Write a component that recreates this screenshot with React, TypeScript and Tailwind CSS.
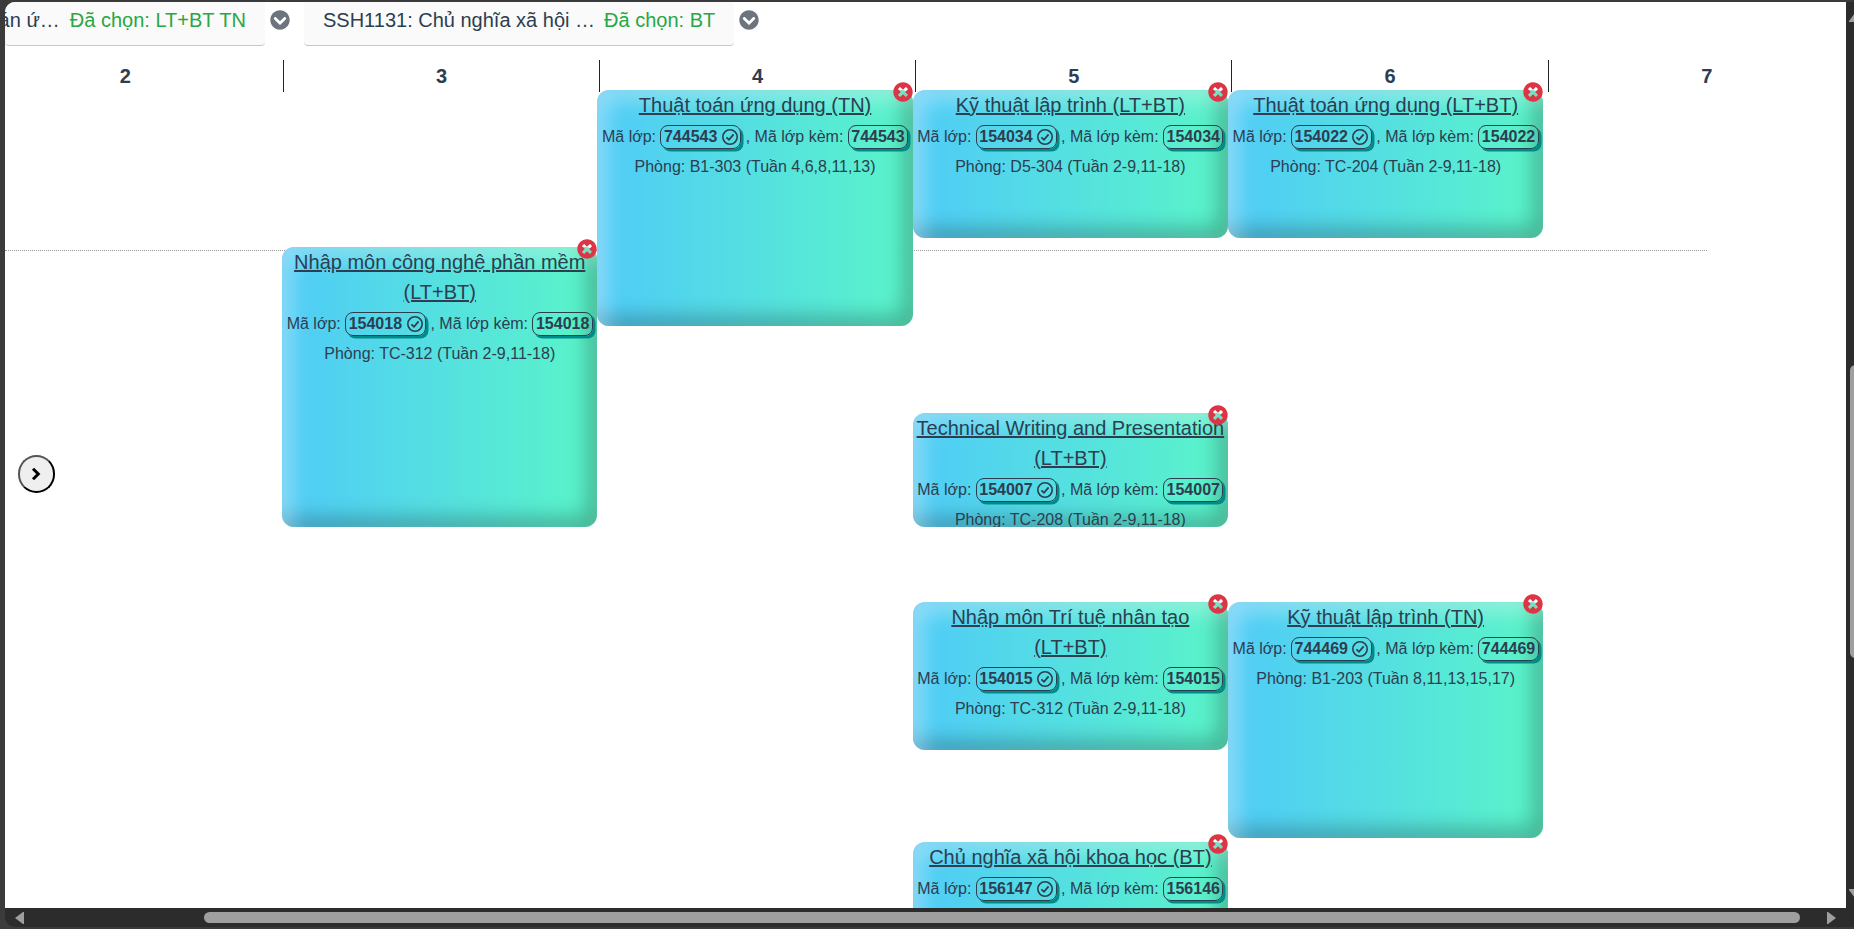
import React from "react";
import { FaChevronCircleDown, FaTimesCircle } from "react-icons/fa";

type Course = {
  title: string;
  code: string;
  pair: string;
  room: string;
  box: string;
};

const day3: Course[] = [
  { title: "Nhập môn công nghệ phần mềm (LT+BT)", code: "154018", pair: "154018", room: "TC-312 (Tuần 2-9,11-18)", box: "mt-[157px] h-[280px]" },
];
const day4: Course[] = [
  { title: "Thuật toán ứng dụng (TN)", code: "744543", pair: "744543", room: "B1-303 (Tuần 4,6,8,11,13)", box: "h-[236px]" },
];
const day5: Course[] = [
  { title: "Kỹ thuật lập trình (LT+BT)", code: "154034", pair: "154034", room: "D5-304 (Tuần 2-9,11-18)", box: "h-[148px]" },
  { title: "Technical Writing and Presentation (LT+BT)", code: "154007", pair: "154007", room: "TC-208 (Tuần 2-9,11-18)", box: "mt-[175px] h-[114px]" },
  { title: "Nhập môn Trí tuệ nhân tạo (LT+BT)", code: "154015", pair: "154015", room: "TC-312 (Tuần 2-9,11-18)", box: "mt-[75px] h-[148px]" },
  { title: "Chủ nghĩa xã hội khoa học (BT)", code: "156147", pair: "156146", room: "", box: "mt-[92px] h-[120px]" },
];
const day6: Course[] = [
  { title: "Thuật toán ứng dụng (LT+BT)", code: "154022", pair: "154022", room: "TC-204 (Tuần 2-9,11-18)", box: "h-[148px]" },
  { title: "Kỹ thuật lập trình (TN)", code: "744469", pair: "744469", room: "B1-203 (Tuần 8,11,13,15,17)", box: "mt-[364px] h-[236px]" },
];
const columns: Course[][] = [[], day3, day4, day5, day6];

function CheckIcon() {
  return (
    <svg viewBox="0 0 16 16" className="ml-[4.5px] h-4 w-4 shrink-0" fill="none" stroke="currentColor" strokeWidth="1.6">
      <circle cx="8" cy="8" r="7.2" />
      <path d="M4.4 8.3 L7 10.8 L11.6 5.3" strokeWidth="1.8" />
    </svg>
  );
}

function CodeBadge({ code, checked }: { code: string; checked?: boolean }) {
  return (
    <span className="flex h-6 items-center rounded-lg border border-[#2c3e50] px-[2.5px] font-bold shadow-[2.5px_2.5px_0_0_#008b8b]">
      {code}
      {checked && <CheckIcon />}
    </span>
  );
}

function CourseCard({ course }: { course: Course }) {
  return (
    <article className={"relative shrink-0 " + course.box}>
      <div className="h-full overflow-hidden rounded-xl bg-[linear-gradient(to_right,#4fcbf8,#5af5c8)] text-center shadow-[inset_10px_10px_20px_0_rgba(255,255,255,0.36),inset_-10px_-10px_20px_0_rgba(0,0,0,0.25)]">
        <h3 className="text-xl leading-[30px] underline">{course.title}</h3>
        <div className="flex h-8 items-center justify-center whitespace-nowrap pt-px text-base">
          <span className="mr-[4.4px]">Mã lớp:</span>
          <CodeBadge code={course.code} checked />
          <span className="mx-[4.4px]">, Mã lớp kèm:</span>
          <CodeBadge code={course.pair} />
        </div>
        {course.room && <p className="text-base leading-[30px]">Phòng: {course.room}</p>}
      </div>
      <button className="absolute -top-[8px] right-0 h-5 w-5" aria-label="Xóa">
        <FaTimesCircle className="h-5 w-5 text-[#dc3545]" />
      </button>
    </article>
  );
}

function CourseTabs() {
  return (
    <div className="flex h-[44px] text-xl leading-[30px]">
      <div className="flex h-[44px] w-[260px] shrink-0 justify-end gap-[10px] rounded-b border-b border-[#c2c8d4] bg-[#fafafa] pr-[19px] pt-[3px] whitespace-nowrap">
        <span>án ứ…</span>
        <span className="text-[#28a745]">Đã chọn: LT+BT TN</span>
      </div>
      <FaChevronCircleDown className="ml-[4.5px] mt-[7.5px] h-5 w-5 shrink-0 text-[#6c757d]" />
      <div className="ml-[14.5px] flex h-[44px] w-[430px] shrink-0 gap-[9px] rounded-b border-b border-[#c2c8d4] bg-[#fafafa] pl-[19px] pt-[3px] whitespace-nowrap">
        <span>SSH1131: Chủ nghĩa xã hội …</span>
        <span className="text-[#28a745]">Đã chọn: BT</span>
      </div>
      <FaChevronCircleDown className="ml-[5px] mt-[7.5px] h-5 w-5 shrink-0 text-[#6c757d]" />
    </div>
  );
}

export default function App() {
  return (
    <div className="flex h-[929px] w-[1854px] flex-col overflow-hidden bg-[#3b3b3b] pl-[5px] pt-[2px] font-['Liberation_Sans',Arial,sans-serif] text-[#2c3e50]">
      <div className="flex h-[906px] shrink-0">
        <main className="relative h-[906px] w-[1841px] shrink-0 overflow-hidden rounded-tl-[10px] bg-white">
          <CourseTabs />
          <div className="mt-[14px] -ml-[37.3px] flex h-8 text-xl font-bold leading-[32px]">
            {["2", "3", "4", "5", "6"].map((d) => (
              <div key={d} className="w-[316.2px] shrink-0 border-r border-[#212529] text-center">{d}</div>
            ))}
            <div className="w-[316.2px] shrink-0 text-center">7</div>
          </div>
          <div className="absolute left-0 top-[248px] w-[1702px] border-t border-dotted border-[#9a9a9a]" />
          <div className="relative -mt-[2px] -ml-[38.2px] flex">
            {columns.map((list, i) => (
              <section key={i} className="flex w-[315.3px] shrink-0 flex-col">
                {list.map((c) => (
                  <CourseCard key={c.code} course={c} />
                ))}
              </section>
            ))}
          </div>
          <button className="absolute left-[13px] top-[453px] flex h-[38px] w-[37px] items-center justify-center rounded-full border-2 border-t-[#555] border-l-[#555] border-r-black border-b-black bg-[#efefef] text-black" aria-label="Mở">
            <svg viewBox="0 0 10 14" className="mr-px h-[14px] w-[10px]" fill="none" stroke="currentColor" strokeWidth="3">
              <path d="M2 1.7 L7.3 7 L2 12.3" />
            </svg>
          </button>
        </main>
        <div className="flex w-2 shrink-0 flex-col overflow-hidden bg-[#2c2c2c] pt-[11px]">
          <svg viewBox="0 0 12 9" className="ml-[3px] h-[9px] w-3 shrink-0 fill-[#9f9f9f]"><path d="M0 9 V8 L6 0 L12 8 V9 Z" /></svg>
          <div className="ml-1 mt-[343px] h-[293px] w-[11px] shrink-0 rounded-full bg-[#9f9f9f]" />
          <svg viewBox="0 0 12 9" className="ml-[3px] mt-[231px] h-[9px] w-3 shrink-0 fill-[#9f9f9f]"><path d="M0 0 V1 L6 9 L12 1 V0 Z" /></svg>
        </div>
      </div>
      <div className="flex h-[19px] items-center rounded-bl-[10px] bg-[#2c2c2c]">
        <svg viewBox="0 0 9 12" className="ml-[10px] h-3 w-[9px] fill-[#9f9f9f]"><path d="M9 0 V12 H8 L0 6 L8 0 Z" /></svg>
        <div className="ml-[180px] h-[11px] w-[1596px] rounded-full bg-[#9f9f9f]" />
        <svg viewBox="0 0 9 12" className="ml-[27px] h-3 w-[9px] fill-[#9f9f9f]"><path d="M0 0 V12 H1 L9 6 L1 0 Z" /></svg>
      </div>
    </div>
  );
}
